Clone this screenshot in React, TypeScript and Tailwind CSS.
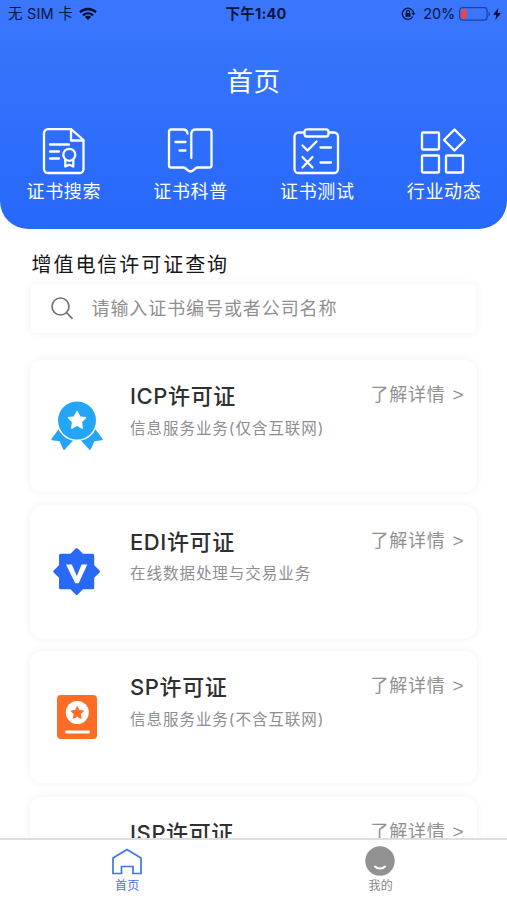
import React from 'react';

type LicenseIcon = 'medal' | 'verified' | 'book';

interface License {
  title: string;
  description?: string;
  icon?: LicenseIcon;
}

const licenses: License[] = [
  { title: 'ICP许可证', description: '信息服务业务(仅含互联网)', icon: 'medal' },
  { title: 'EDI许可证', description: '在线数据处理与交易业务', icon: 'verified' },
  { title: 'SP许可证', description: '信息服务业务(不含互联网)', icon: 'book' },
  { title: 'ISP许可证' },
];

function SearchCertIcon() {
  return (
    <svg width="48" height="48" viewBox="-1 0 48 48" fill="none" stroke="white" strokeWidth="2.3" strokeLinecap="round" strokeLinejoin="round">
      <path d="M31 2.200H8A4 4 0 0 0 4 6.200V42A4 4 0 0 0 8 46H39.500A4 4 0 0 0 43.500 42V13Z" />
      <path d="M31 2.500V13.500H43" />
      <path d="M10 17.500H29M10 24.500H19M10 31.500H19" />
      <circle cx="29.300" cy="27.800" r="6" />
      <path d="M25.300 33V39.500L29.300 37.800L33.300 39.500V33" />
    </svg>
  );
}

function OpenBookIcon() {
  return (
    <svg width="48" height="48" viewBox="0 0 48 48" fill="none" stroke="white" strokeWidth="2.3" strokeLinecap="round" strokeLinejoin="round">
      <path d="M21.500 6.500C21.300 4 19.500 2.500 17 2.500H5A2 2 0 0 0 3 4.500V38.500A2 2 0 0 0 5 40.500H17.500C20.500 40.500 21 44.500 24.500 44.500S28.500 40.500 31.500 40.500H43.500A2 2 0 0 0 45.500 38.500V4.500A2 2 0 0 0 43.500 2.500H30C27 2.500 25.300 4.500 25.300 7V31" />
      <path d="M9.500 15H19.500M13.500 23.500H19.500" />
    </svg>
  );
}

function TestIcon() {
  return (
    <svg width="48" height="48" viewBox="1 0 48 48" fill="none" stroke="white" strokeWidth="2.3" strokeLinecap="round" strokeLinejoin="round">
      <path d="M12 5.500H6.500A4 4 0 0 0 2.500 9.500V42A4 4 0 0 0 6.500 46H42A4 4 0 0 0 46 42V9.500A4 4 0 0 0 42 5.500H37" />
      <rect x="12.500" y="2.300" width="24" height="7.200" rx="2.500" />
      <path d="M10.500 18.500L15.500 23.500L24.500 14.500M28.500 20.500H39M10.500 30L20.500 40.500M20.500 30L10.500 40.500M28.500 35.500H39" />
    </svg>
  );
}

function NewsIcon() {
  return (
    <svg width="48" height="48" viewBox="1.500 0 48 48" fill="none" stroke="white" strokeWidth="2.3" strokeLinejoin="round">
      <rect x="3.500" y="5.500" width="17" height="17" rx="1" />
      <rect x="3.500" y="28.500" width="17" height="17" rx="1" />
      <rect x="27.500" y="28.500" width="17" height="17" rx="1" />
      <path d="M36 2.500L46.500 13L36 23.500L25.500 13Z" />
    </svg>
  );
}

const menu = [
  { label: '证书搜索', Icon: SearchCertIcon },
  { label: '证书科普', Icon: OpenBookIcon },
  { label: '证书测试', Icon: TestIcon },
  { label: '行业动态', Icon: NewsIcon },
];

function StatusBar() {
  return (
    <div className="grid h-7 grid-cols-3 items-center pl-[8px] pr-[6px] leading-7 text-[#061440]">
      <div className="flex items-center gap-[6px]">
        <span className="whitespace-nowrap text-[14.5px] tracking-[0.2px]">无 SIM 卡</span>
        <svg width="18" height="14" viewBox="0 0 18 14" fill="none" stroke="#000a2c" strokeWidth="2.3">
          <path d="M1 5.200C5.500 0.900 12.500 0.900 17 5.200" />
          <path d="M4 8.300C7 5.600 11 5.600 14 8.300" />
          <path d="M9 13L5.900 9.900C7.700 8.300 10.300 8.300 12.100 9.900Z" fill="#000a2c" stroke="none" />
        </svg>
      </div>
      <div className="pl-[3px] text-center text-[14.5px] font-bold tracking-[0.2px]">下午1:40</div>
      <div className="flex items-center justify-end">
        <svg width="15" height="14" viewBox="0 0 15 14" fill="none" stroke="#061440" strokeWidth="1.3">
          <path d="M11.800 9.500A5.600 5.600 0 1 1 12.500 6.300" />
          <path d="M10.400 6H14.400L12.400 8.600Z" fill="#061440" stroke="none" />
          <rect x="4.500" y="6" width="5" height="3.800" fill="#061440" stroke="none" />
          <path d="M5.500 6V4.800A1.500 1.500 0 0 1 8.500 4.800V6" />
        </svg>
        <span className="ml-[7px] text-[14.5px] tracking-[-0.2px]">20%</span>
        <svg className="ml-[4px]" width="32" height="14" viewBox="0 0 32 14">
          <rect x="0.600" y="0.600" width="27.500" height="12.500" rx="3" fill="none" stroke="#1d409f" strokeWidth="1.2" />
          <rect x="2" y="2" width="5.500" height="9.700" rx="1.5" fill="#f04444" />
          <path d="M29.500 4.500C31.400 5.500 31.400 8.500 29.500 9.500Z" fill="#1d409f" />
        </svg>
        <svg className="ml-[2px]" width="8" height="12" viewBox="0 0 8 12">
          <path d="M5.500 0L0 6.700H3.500L2.200 12L8 4.900H4.500Z" fill="#000a2c" />
        </svg>
      </div>
    </div>
  );
}

function CardIcon({ icon }: { icon?: LicenseIcon }) {
  if (icon === 'medal') {
    return (
      <svg width="54" height="54" viewBox="0 0 54 54">
        <g fill="#25a5f7" stroke="#25a5f7" strokeWidth="1.5" strokeLinejoin="round">
          <path d="M9 31L2 40.500L10 41.500L14 50.300L22.500 41L18 34Z" />
          <path d="M45 31L52 40.500L44 41.500L40 50.300L31.500 41L36 34Z" />
        </g>
        <circle cx="27" cy="21.500" r="19.700" fill="#25a5f7" stroke="white" strokeWidth="1.5" />
        <path d="M27 12.500L29.700 17.900L35.500 18.800L31.300 23L32.200 29L27 26.200L21.800 29L22.700 23L18.500 18.800L24.300 17.900Z" fill="white" stroke="white" strokeWidth="1.5" strokeLinejoin="round" />
      </svg>
    );
  }
  if (icon === 'verified') {
    return (
      <svg width="54" height="54" viewBox="0 0 54 54">
        <path d="M26.700 4.500L32.400 10.200H42.700V20.800L48.500 26.500L42.700 32.200V42.800H32.400L26.700 48.500L21 42.800H10.500V32.200L4.700 26.500L10.500 20.800V10.200H21Z" fill="#286af7" stroke="#286af7" strokeWidth="3" strokeLinejoin="round" />
        <path d="M16 19.500H21.800L26.800 31L31.600 19.500H37.300L28.600 38.300H25.200Z" fill="white" />
      </svg>
    );
  }
  if (icon === 'book') {
    return (
      <svg width="54" height="54" viewBox="0 0 54 54">
        <rect x="7" y="5" width="40" height="44" rx="4" fill="#fd6d25" />
        <circle cx="27.300" cy="22.500" r="11.500" fill="white" />
        <path d="M27.300 16.500L29.200 20.400L33.500 21L30.400 24L31.100 28.300L27.300 26.300L23.500 28.300L24.200 24L21.100 21L25.400 20.400Z" fill="#fd6d25" stroke="#fd6d25" strokeLinejoin="round" />
        <rect x="15.300" y="40.500" width="24.500" height="3" rx="1" fill="white" />
      </svg>
    );
  }
  return <div className="size-[54px]" />;
}

function LicenseCard({ license }: { license: License }) {
  return (
    <div className="flex h-[132px] shrink-0 rounded-xl bg-white pl-5 pr-[13.5px] shadow-[0_0_9px_rgba(0,0,0,0.06)]">
      <div className="mt-[39px] w-[80px] shrink-0">
        <CardIcon icon={license.icon} />
      </div>
      <div className="min-w-0 flex-1 whitespace-nowrap pt-[21px]">
        <div className="text-[22px] font-medium leading-[30px] tracking-[0.6px] text-[#303030]">{license.title}</div>
        {license.description && (
          <div className="mt-[5.5px] text-[15.5px] leading-6 tracking-[0.97px] text-[#8c8e94]">{license.description}</div>
        )}
      </div>
      <div className="mt-[22px] flex gap-[7px] whitespace-nowrap text-[18px] leading-[26px] text-[#909090]">
        <span className="tracking-[0.7px]">了解详情</span>
        <span className="font-['Liberation_Sans',sans-serif] text-[19px]">&gt;</span>
      </div>
    </div>
  );
}

export default function App() {
  return (
    <div className="flex h-[900px] w-full flex-col overflow-hidden bg-white font-[Inter,'Noto_Sans_CJK_SC',sans-serif]">
      {/* Header */}
      <header className="h-[229px] shrink-0 rounded-b-[28px] bg-linear-to-b from-[#3b77fd] to-[#2668fb] text-white">
        <StatusBar />
        <h1 className="mt-[34px] text-center text-[26.5px] leading-[38px] tracking-[0.5px]">首页</h1>
        <nav className="mt-[27px] grid grid-cols-4">
          {menu.map(({ label, Icon }) => (
            <div key={label} className="flex flex-col items-center">
              <Icon />
              <span className="mt-[4px] pl-[1px] text-[18px] leading-[26px] tracking-[0.7px]">{label}</span>
            </div>
          ))}
        </nav>
      </header>

      {/* Search and licence list */}
      <main className="flex min-h-0 flex-1 flex-col overflow-hidden px-[30px] pt-[21px]">
        <h2 className="pl-[1.5px] text-[20px] leading-[30px] tracking-[1.95px] text-[#161616]">增值电信许可证查询</h2>
        <div className="mx-[1px] mt-[4px] flex h-[49px] shrink-0 items-center rounded-sm bg-white pl-[20px] shadow-[0_0_9px_rgba(0,0,0,0.06)]">
          <svg width="23" height="23" viewBox="0 0 23 23" fill="none" stroke="#70727e" strokeWidth="1.7">
            <circle cx="9.500" cy="9.500" r="8.500" />
            <path d="M15.500 15.500L21.500 21.800" />
          </svg>
          <span className="ml-[17.5px] text-[18px] leading-[26px] tracking-[0.92px] text-[#8f8f8f]">请输入证书编号或者公司名称</span>
        </div>
        <div className="mt-[27px] flex flex-col gap-[13.5px]">
          {licenses.map((license) => (
            <LicenseCard key={license.title} license={license} />
          ))}
        </div>
      </main>

      {/* Tab bar */}
      <footer className="grid h-[62px] shrink-0 grid-cols-2 border-t-2 border-[#dedede] bg-white text-[12px] leading-4">
        <div className="flex flex-col items-center pt-[7px] text-[#3f73ee]">
          <svg width="32" height="30" viewBox="0 0 32 30" fill="none" stroke="currentColor" strokeWidth="1.7">
            <path d="M2 11L16 2.500L30 11V26.500H22V19.500H10.500V26.500H2Z" />
          </svg>
          <span className="pl-px pt-px tracking-[0.3px]">首页</span>
        </div>
        <div className="flex flex-col items-center pt-[6px] text-[#858585]">
          <svg width="32" height="31" viewBox="0 0 32 31">
            <circle cx="16" cy="15" r="14.700" fill="#929292" />
            <path d="M11 20.500C13.500 23.300 18.500 23.300 21 20.500" fill="none" stroke="white" strokeWidth="2" strokeLinecap="round" />
          </svg>
          <span className="pl-px pt-px tracking-[0.3px]">我的</span>
        </div>
      </footer>
    </div>
  );
}
